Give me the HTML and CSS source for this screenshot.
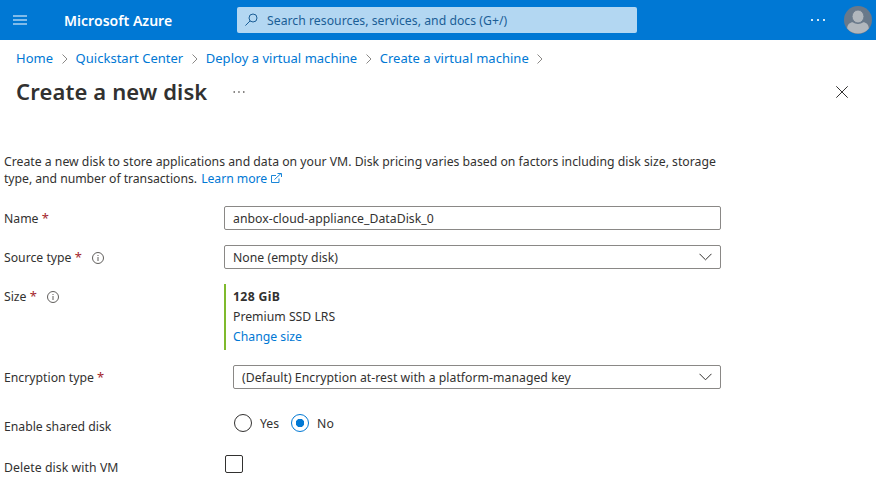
FILE: index.html
```html
<!DOCTYPE html>
<html lang="en">
<head>
<meta charset="utf-8">
<title>Create a new disk - Microsoft Azure</title>
<link rel="stylesheet" href="styles.css">
</head>
<body>
<header class="topbar">
  <svg class="menu" width="14" height="10" viewBox="0 0 14 10" aria-hidden="true"><path d="M0 1h14M0 5h14M0 9h14"/></svg>
  <span class="brand">Microsoft Azure</span>
  <div class="search">
    <svg class="search-icon" width="14" height="14" viewBox="0 0 14 14" aria-hidden="true"><circle cx="8" cy="5" r="4"/><path d="M5.100 7.900.4 12.600"/></svg>
    <span class="search-text">Search resources, services, and docs (G+/)</span>
  </div>
  <svg class="more" width="14" height="2" viewBox="0 0 14 2" aria-hidden="true"><path d="M0 0h2v2H0zM6 0h2v2H6zM12 0h2v2h-2z"/></svg>
  <svg class="avatar" width="28" height="28" viewBox="0 0 28 28" aria-hidden="true"><circle class="avatar-bg" cx="14" cy="14" r="14"/><path class="avatar-fg" d="M3.200 22.500C3.200 18.500 6 16.300 8.800 16.300c1.700 1.100 3.200 1.700 5.200 1.700s3.500-.6 5.200-1.700c2.800 0 5.600 2.200 5.600 6.200A14 14 0 0 1 3.200 22.500z"/><ellipse class="avatar-fg avatar-head" cx="14" cy="10.500" rx="5.900" ry="6.400"/></svg>
</header>
<nav class="crumbs">
  <a class="crumb">Home</a><svg class="sep" width="6" height="10" viewBox="0 0 6 10"><path d="M.5.5 5 5 .5 9.500"/></svg>
  <a class="crumb">Quickstart Center</a><svg class="sep" width="6" height="10" viewBox="0 0 6 10"><path d="M.5.5 5 5 .5 9.500"/></svg>
  <a class="crumb">Deploy a virtual machine</a><svg class="sep" width="6" height="10" viewBox="0 0 6 10"><path d="M.5.5 5 5 .5 9.500"/></svg>
  <a class="crumb">Create a virtual machine</a><svg class="sep" width="6" height="10" viewBox="0 0 6 10"><path d="M.5.5 5 5 .5 9.500"/></svg>
</nav>
<div class="title-row">
  <h1 class="title">Create a new disk</h1>
  <svg class="title-more" width="12" height="2" viewBox="0 0 12 2" aria-hidden="true"><path d="M.5.3H2v1.500H.5zM5.200.3h1.500v1.500H5.200zM10 .3h1.500v1.500H10z"/></svg>
  <svg class="close" width="12" height="12" viewBox="0 0 12 12" aria-label="Close"><path d="m.3.3 11.400 11.400M11.700.3.3 11.700"/></svg>
</div>
<main class="content">
  <p class="intro">Create a new disk to store applications and data on your VM. Disk pricing varies based on factors including disk size, storage<br><span class="intro-end">type, and number of transactions.</span> <a class="link learn">Learn more</a><svg class="external" width="11" height="10" viewBox="0 0 11 10"><path d="M5 2.500H.5v7h7.500V5.500M3.500 6.500 10 .5M6.500.5H10.500V4"/></svg></p>
  <div class="row">
    <div class="label">Name <span class="req">*</span></div>
    <div class="box"><span>anbox-cloud-appliance_DataDisk_0</span></div>
  </div>
  <div class="row">
    <div class="label">Source type <span class="req">*</span><svg class="info" width="12" height="12" viewBox="0 0 12 12"><circle cx="6" cy="6" r="5.500"/><path d="M6 5v4M6 3v1"/></svg></div>
    <div class="box"><span>None (empty disk)</span><svg class="chevron" width="13" height="8" viewBox="0 0 13 8"><path d="m.5.8 6 6 6-6"/></svg></div>
  </div>
  <div class="row">
    <div class="label">Size <span class="req">*</span><svg class="info" width="12" height="12" viewBox="0 0 12 12"><circle cx="6" cy="6" r="5.500"/><path d="M6 5v4M6 3v1"/></svg></div>
    <div class="size"><b>128 GiB</b><span>Premium SSD LRS</span><a class="link">Change size</a></div>
  </div>
  <div class="row">
    <div class="label">Encryption type <span class="req">*</span></div>
    <div class="box inset"><span>(Default) Encryption at-rest with a platform-managed key</span><svg class="chevron" width="13" height="8" viewBox="0 0 13 8"><path d="m.5.8 6 6 6-6"/></svg></div>
  </div>
  <div class="row shared-row">
    <div class="label low">Enable shared disk</div>
    <div class="radios">
      <span class="radio"></span><span class="yes">Yes</span>
      <span class="radio selected"></span><span>No</span>
    </div>
  </div>
  <div class="row delete-row">
    <div class="label low vm">Delete disk with VM</div>
    <span class="checkbox"></span>
  </div>
</main>
</body>
</html>
```
FILE: styles.css
```css
* { box-sizing: border-box; }
body {
  margin: 0;
  height: 503px;
  overflow: hidden;
  background: #fff;
  color: #323130;
  font: 12.24px/17px "Noto Sans", sans-serif;
}
svg { flex: none; fill: none; }
.topbar {
  display: flex;
  align-items: center;
  height: 40px;
  padding: 0 4px 0 13px;
  background: #0078d4;
}
.menu { stroke: #80bbe9; stroke-width: 2; }
.brand {
  width: 173px;
  margin-left: 37px;
  color: #fff;
  font-size: 14px;
  font-weight: 600;
  letter-spacing: 0.04px;
  white-space: nowrap;
}
.search {
  display: flex;
  align-items: center;
  width: 400px;
  height: 26px;
  padding-left: 8px;
  border-radius: 2px;
  background: #b3d7f2;
  color: #1b5e96;
}
.search-icon { stroke: #1b5e96; }
.search-text { margin-left: 8px; letter-spacing: 0.02px; }
.more { margin-left: auto; margin-right: 19px; fill: #d4e9f8; }
.avatar-bg { fill: #69798a; }
.avatar-fg { fill: #b1b7bd; }
.avatar-head { stroke: #69798a; stroke-width: 0.8; }
.crumbs {
  display: flex;
  align-items: center;
  height: 36px;
  padding-left: 16px;
  font-size: 13px;
  white-space: nowrap;
}
.crumb, .link { color: #0078d4; }
.crumb { letter-spacing: 0.02px; }
.sep { margin: 2px 7.8px 0 8.7px; stroke: #8a8886; }
.title-row {
  display: flex;
  align-items: center;
  height: 32px;
  padding: 0 28px 0 16px;
}
.title { margin: -2px 0 0; font-size: 22px; line-height: 30px; font-weight: 600; letter-spacing: 0.13px; white-space: nowrap; }
.title-more { margin-left: 26px; fill: #605e5c; }
.close { margin-left: auto; stroke: #323130; }
.content { padding: 45px 0 0 4px; }
.intro { margin: 0 0 19px; white-space: nowrap; }
.intro-end { letter-spacing: -0.05px; }
.learn { margin-left: 1px; letter-spacing: -0.05px; }
.external { margin-left: 4px; stroke: #0078d4; stroke-width: 0.9; vertical-align: 0; }
.row { display: flex; width: 717px; margin-bottom: 15px; }
.label { display: flex; flex: none; align-items: center; width: 220px; height: 24px; white-space: pre; }
.req { color: #a4262c; font-size: 13px; }
.info { margin: 1px 0 0 10px; stroke: #605e5c; }
.box {
  display: flex;
  flex: 1;
  align-items: center;
  justify-content: space-between;
  height: 24px;
  padding: 0 8px;
  border: 1px solid #8a8886;
  border-radius: 2px;
  letter-spacing: 0.03px;
}
.inset { margin-left: 9px; }
.chevron { stroke: #323130; }
.size {
  display: flex;
  flex-direction: column;
  height: 66px;
  padding: 3px 0 0 7px;
  border-left: 2px solid #7fba2d;
  line-height: 20px;
}
.size b { letter-spacing: 0.35px; }
.shared-row { margin: 24px 0 0; height: 24px; }
.low { height: 27px; letter-spacing: -0.03px; }
.vm { letter-spacing: 0.08px; }
.radios { display: flex; align-items: center; height: 20px; margin-left: 10px; }
.radio { width: 18px; height: 18px; margin-right: 8px; border: 1px solid #323130; border-radius: 50%; }
.yes { margin-right: 12px; }
.selected { border-color: #0078d4; background: radial-gradient(circle, #0078d4 4px, transparent 4.500px); }
.delete-row { margin-top: 17px; }
.checkbox { width: 18px; height: 18px; margin: 1px 0 0 1px; border: 1px solid #323130; border-radius: 2px; }
```
